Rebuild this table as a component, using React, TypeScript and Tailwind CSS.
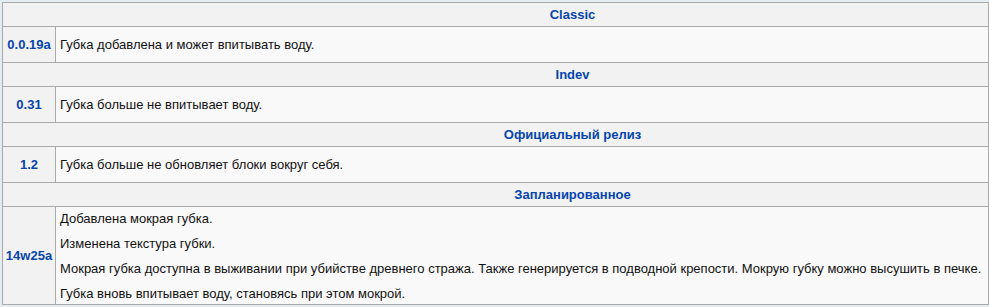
import React from "react";

type Section = {
  title: string;
  version: string;
  notes: string[];
};

const sections: Section[] = [
  { title: "Classic", version: "0.0.19a", notes: ["Губка добавлена и может впитывать воду."] },
  { title: "Indev", version: "0.31", notes: ["Губка больше не впитывает воду."] },
  { title: "Официальный релиз", version: "1.2", notes: ["Губка больше не обновляет блоки вокруг себя."] },
  {
    title: "Запланированное",
    version: "14w25a",
    notes: [
      "Добавлена мокрая губка.",
      "Изменена текстура губки.",
      "Мокрая губка доступна в выживании при убийстве древнего стража. Также генерируется в подводной крепости. Мокрую губку можно высушить в печке.",
      "Губка вновь впитывает воду, становясь при этом мокрой.",
    ],
  },
];

export default function App() {
  return (
    <div className="w-[989px] h-[307px] bg-[#e4edf2] pt-[2px] pl-[2px] font-['Liberation_Sans',Arial,sans-serif] text-[13px] text-[#111]">
      <div className="w-[987px] border-l border-t border-[#aaaaaa]">
        {sections.map((s) => (
          <React.Fragment key={s.title}>
            {/* Section header */}
            <div className="h-[24px] border-r border-b border-[#aaaaaa] bg-[#f2f2f2] flex items-center justify-center pl-[154px] font-bold text-[#0645ad]">
              {s.title}
            </div>

            {/* Version row */}
            <div className="flex">
              <div className="w-[53px] shrink-0 border-r border-b border-[#aaaaaa] bg-[#f2f2f2] flex items-center justify-center font-bold text-[#0645ad]">
                {s.version}
              </div>
              {s.notes.length === 1 ? (
                <div className="flex-1 h-[36px] border-r border-b border-[#aaaaaa] bg-[#f9f9f9] flex items-center pl-[4px]">
                  {s.notes[0]}
                </div>
              ) : (
                <div className="flex-1 h-[98px] border-r border-b border-[#aaaaaa] bg-[#f9f9f9] pl-[4px] pt-[1px] flex flex-col gap-[3px]">
                  {s.notes.map((n) => (
                    <p key={n} className="leading-[22px] whitespace-nowrap">
                      {n}
                    </p>
                  ))}
                </div>
              )}
            </div>
          </React.Fragment>
        ))}
      </div>
    </div>
  );
}
